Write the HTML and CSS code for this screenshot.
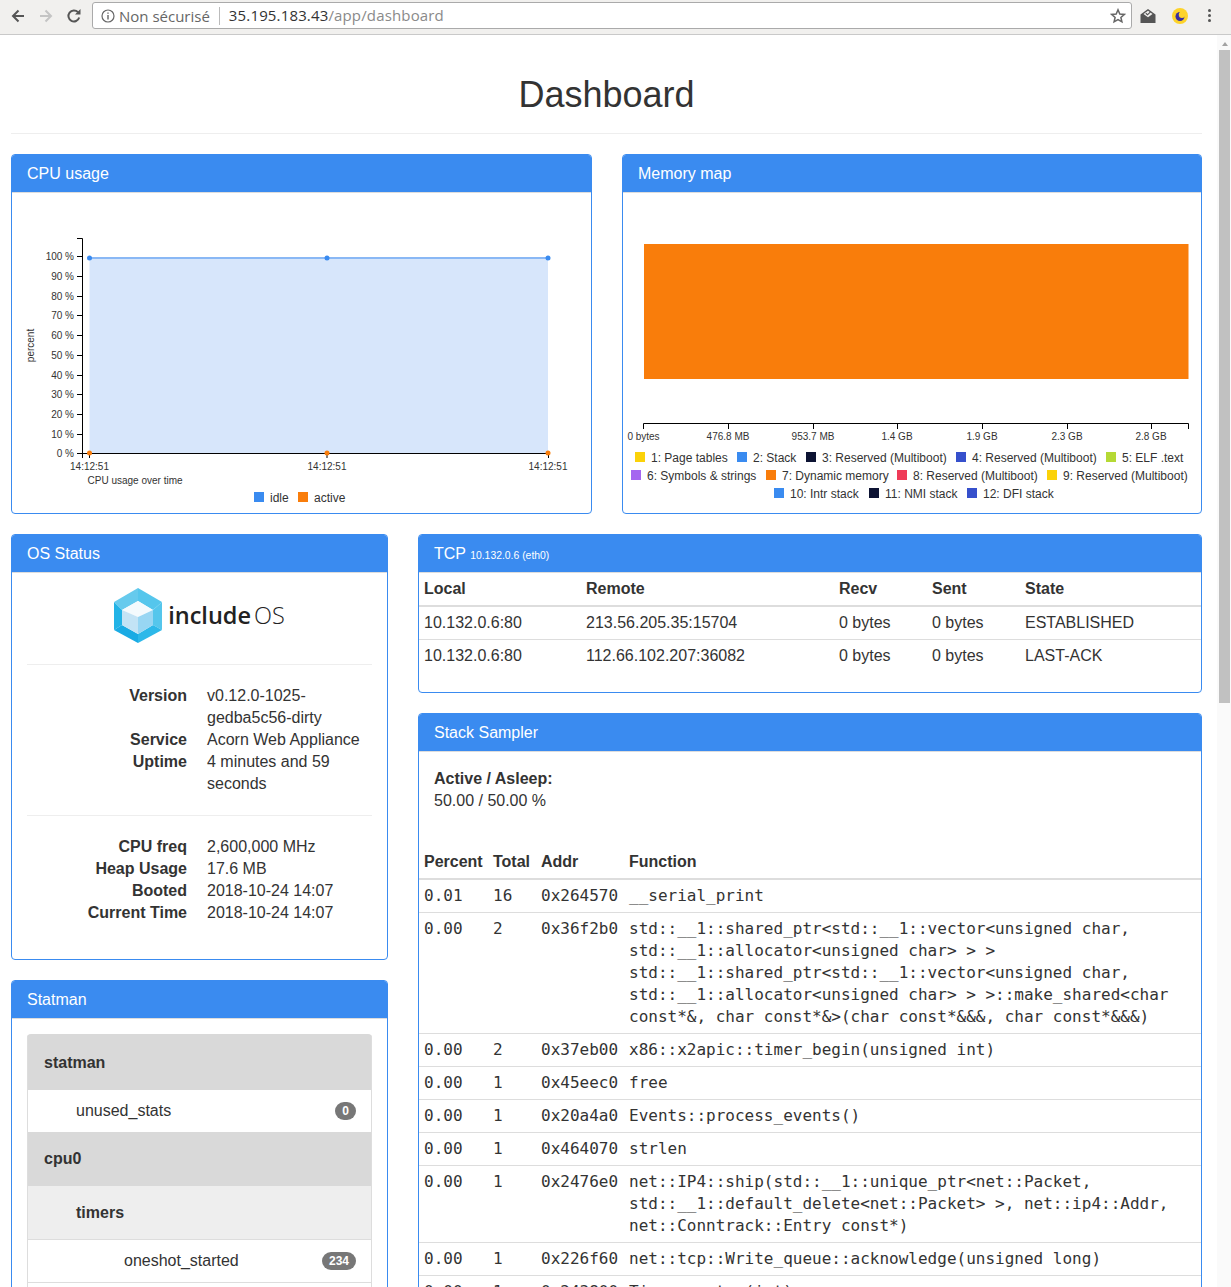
FILE: index.html
```html
<!DOCTYPE html>
<html lang="fr">
<head>
  <meta charset="UTF-8">
  <title>Dashboard</title>
  <link rel="stylesheet" href="styles.css">
</head>
<body>
  <div class="toolbar">
    <svg class="nav-icon" viewBox="0 0 16 16"><path d="M14 8H3.500M8.500 2.500 3 8l5.500 5.500" fill="none" stroke="#555" stroke-width="2"/></svg>
    <svg class="nav-icon" viewBox="0 0 16 16"><path d="M2 8h10.500M7.500 2.500 13 8l-5.500 5.500" fill="none" stroke="#c4c4c4" stroke-width="2"/></svg>
    <svg class="nav-icon" viewBox="0 0 16 16"><path d="M13.200 9.500A5.500 5.500 0 1 1 12 4.200" fill="none" stroke="#555" stroke-width="2"/><path d="M9 6.500h5.500V1z" fill="#555"/></svg>
    <div class="urlbar">
      <svg class="info-icon" viewBox="0 0 14 14"><circle cx="7" cy="7" r="6" fill="none" stroke="#666" stroke-width="1.200"/><path d="M6.300 3.400h1.400v1.400H6.300zM6.300 6h1.400v4.600H6.300z" fill="#666"/></svg>
      <span class="insecure">Non sécurisé</span>
      <span class="url"><b>35.195.183.43</b>/app/dashboard</span>
      <svg class="star" viewBox="0 0 16 16"><path d="M8 1.800l1.800 4.200 4.500.4-3.400 3 1 4.400L8 11.500l-3.900 2.300 1-4.400-3.400-3 4.500-.4z" fill="none" stroke="#666" stroke-width="1.500"/></svg>
    </div>
    <svg class="ext mail" viewBox="0 0 16 16"><path d="M.5 6.500 8 1 15.500 6.500V15H.5z" fill="#555"/><path d="M3.500 6 8 2.800 12.500 6 8 9.200z" fill="#f1f0ee"/><path d="M5.800 5.300 7.500 6.800 10.500 3.800" fill="none" stroke="#555" stroke-width="1.200"/></svg>
    <svg class="ext moon" viewBox="0 0 16 16"><circle cx="8" cy="8" r="8" fill="#fdd32a"/><circle cx="8" cy="8.500" r="4.500" fill="#3a2ea0"/><circle cx="10" cy="6.800" r="3.200" fill="#fdd32a"/></svg>
    <div class="kebab"><i></i><i></i><i></i></div>
  </div>

  <div class="viewport">
    <div class="page">
      <h1 class="page-title">Dashboard</h1>
      <hr class="page-rule">

      <div class="row-half">
        <section class="panel">
          <div class="panel-heading">CPU usage</div>
          <svg class="chart" viewBox="12 193 579 320">
            <path d="M89.500 258H548V453H89.500z" fill="#d7e6fb"/>
            <path d="M89.500 258H548" fill="none" stroke="#8ab8f5" stroke-width="2"/>
            <path d="M77 238.500H82.500V458M82.500 453.500H549" fill="none" stroke="#000"/>
            <path d="M77 256.500h5M77 276.500h5M77 296.500h5M77 315.500h5M77 335.500h5M77 355.500h5M77 375.500h5M77 394.500h5M77 414.500h5M77 434.500h5M77 453.500h5M89.500 453v5M327 453v5M548.500 453v5" fill="none" stroke="#000"/>
            <g fill="#3a8bf0"><circle cx="89.500" cy="258" r="2.500"/><circle cx="327" cy="258" r="2.500"/><circle cx="548" cy="258" r="2.500"/></g>
            <g fill="#f97d0b"><circle cx="89.500" cy="453" r="2.500"/><circle cx="327" cy="453" r="2.500"/><circle cx="548" cy="453" r="2.500"/></g>
            <g class="tick-y">
              <text x="74" y="260">100 %</text><text x="74" y="280">90 %</text><text x="74" y="300">80 %</text><text x="74" y="319">70 %</text><text x="74" y="339">60 %</text><text x="74" y="359">50 %</text><text x="74" y="379">40 %</text><text x="74" y="398">30 %</text><text x="74" y="418">20 %</text><text x="74" y="438">10 %</text><text x="74" y="457">0 %</text>
            </g>
            <g class="tick-x">
              <text x="89.500" y="470">14:12:51</text><text x="327" y="470">14:12:51</text><text x="548" y="470">14:12:51</text>
            </g>
            <text class="tick" transform="translate(34 345.500) rotate(-90)" text-anchor="middle">percent</text>
            <text class="tick" x="87.500" y="484">CPU usage over time</text>
            <rect x="254" y="492" width="10" height="10" fill="#3a8bf0"/><text class="legend" x="270" y="502">idle</text>
            <rect x="298" y="492" width="10" height="10" fill="#f97d0b"/><text class="legend" x="314" y="502">active</text>
          </svg>
        </section>

        <section class="panel">
          <div class="panel-heading">Memory map</div>
          <svg class="chart" viewBox="623 193 578 320">
            <rect x="644" y="244" width="544.500" height="135" fill="#f97d0b"/>
            <path d="M643.500 429V423.500H1188.500V429M728.500 423v6M813.500 423v6M897.500 423v6M982.500 423v6M1067.500 423v6M1151.500 423v6" fill="none" stroke="#000"/>
            <g class="tick-x">
              <text x="643.500" y="440">0 bytes</text><text x="728" y="440">476.8 MB</text><text x="813" y="440">953.7 MB</text><text x="897" y="440">1.4 GB</text><text x="982" y="440">1.9 GB</text><text x="1067" y="440">2.3 GB</text><text x="1151" y="440">2.8 GB</text>
            </g>
            <rect x="635" y="452" width="10" height="10" fill="#fbd209"/><text class="legend" x="651" y="462">1: Page tables</text>
            <rect x="737" y="452" width="10" height="10" fill="#3a8bf0"/><text class="legend" x="753" y="462">2: Stack</text>
            <rect x="806" y="452" width="10" height="10" fill="#0d1333"/><text class="legend" x="822" y="462">3: Reserved (Multiboot)</text>
            <rect x="956" y="452" width="10" height="10" fill="#3650cc"/><text class="legend" x="972" y="462">4: Reserved (Multiboot)</text>
            <rect x="1106" y="452" width="10" height="10" fill="#b5d935"/><text class="legend" x="1122" y="462">5: ELF .text</text>
            <rect x="631" y="470" width="10" height="10" fill="#a566f0"/><text class="legend" x="647" y="480">6: Symbols &amp; strings</text>
            <rect x="766" y="470" width="10" height="10" fill="#f97d0b"/><text class="legend" x="782" y="480">7: Dynamic memory</text>
            <rect x="897" y="470" width="10" height="10" fill="#ef3b58"/><text class="legend" x="913" y="480">8: Reserved (Multiboot)</text>
            <rect x="1047" y="470" width="10" height="10" fill="#fbd209"/><text class="legend" x="1063" y="480">9: Reserved (Multiboot)</text>
            <rect x="774" y="488" width="10" height="10" fill="#3a8bf0"/><text class="legend" x="790" y="498">10: Intr stack</text>
            <rect x="869" y="488" width="10" height="10" fill="#0d1333"/><text class="legend" x="885" y="498">11: NMI stack</text>
            <rect x="967" y="488" width="10" height="10" fill="#3650cc"/><text class="legend" x="983" y="498">12: DFI stack</text>
          </svg>
        </section>
      </div>

      <div class="row-split">
        <div class="col-stack">
          <section class="panel">
            <div class="panel-heading">OS Status</div>
            <div class="panel-body">
              <div class="logo">
                <svg class="logo-mark" viewBox="114 588 48 55">
                  <path d="M138 588 162 602 153 610 138 601z" fill="#55c6ec"/>
                  <path d="M138 588 114 602 122 610 138 601z" fill="#66caed"/>
                  <path d="M162 602V630L153 625V610z" fill="#55c6ec"/>
                  <path d="M114 602V630L122 625V610z" fill="#22b3e6"/>
                  <path d="M162 630 138 643V634L153 625z" fill="#2db8e9"/>
                  <path d="M114 630 138 643V634L122 625z" fill="#1aabe4"/>
                  <path d="M138 601 153 610 138 617 122 610z" fill="#f4fafd"/>
                  <path d="M122 610 138 617V634L122 625z" fill="#c3e3f5"/>
                  <path d="M153 610 138 617V634L153 625z" fill="#98d6f3"/>
                </svg>
                <span class="logo-text"><b>include</b>OS</span>
              </div>
              <hr>
              <dl class="info">
                <dt>Version</dt><dd>v0.12.0-1025-gedba5c56-dirty</dd>
                <dt>Service</dt><dd>Acorn Web Appliance</dd>
                <dt>Uptime</dt><dd>4 minutes and 59 seconds</dd>
              </dl>
              <hr>
              <dl class="info">
                <dt>CPU freq</dt><dd>2,600,000 MHz</dd>
                <dt>Heap Usage</dt><dd>17.6 MB</dd>
                <dt>Booted</dt><dd>2018-10-24 14:07</dd>
                <dt>Current Time</dt><dd>2018-10-24 14:07</dd>
              </dl>
            </div>
          </section>

          <section class="panel">
            <div class="panel-heading">Statman</div>
            <div class="panel-body">
              <ul class="stats">
                <li class="stat-group">statman</li>
                <li class="stat-item depth-1">unused_stats <span class="badge">0</span></li>
                <li class="stat-group">cpu0</li>
                <li class="stat-subgroup">timers</li>
                <li class="stat-item depth-2 ruled">oneshot_started <span class="badge">234</span></li>
                <li class="stat-item stat-next"></li>
              </ul>
            </div>
          </section>
        </div>

        <div class="col-stack">
          <section class="panel">
            <div class="panel-heading">TCP <small>10.132.0.6 (eth0)</small></div>
            <table class="grid tcp">
              <thead>
                <tr><th>Local</th><th>Remote</th><th>Recv</th><th>Sent</th><th>State</th></tr>
              </thead>
              <tbody>
                <tr><td>10.132.0.6:80</td><td>213.56.205.35:15704</td><td>0 bytes</td><td>0 bytes</td><td>ESTABLISHED</td></tr>
                <tr><td>10.132.0.6:80</td><td>112.66.102.207:36082</td><td>0 bytes</td><td>0 bytes</td><td>LAST-ACK</td></tr>
              </tbody>
            </table>
          </section>

          <section class="panel">
            <div class="panel-heading">Stack Sampler</div>
            <div class="panel-body sampler-summary">
              <strong>Active / Asleep:</strong><br>
              50.00 / 50.00 %
            </div>
            <table class="grid sampler">
              <thead>
                <tr><th>Percent</th><th>Total</th><th>Addr</th><th>Function</th></tr>
              </thead>
              <tbody>
                <tr><td>0.01</td><td>16</td><td>0x264570</td><td>__serial_print</td></tr>
                <tr><td>0.00</td><td>2</td><td>0x36f2b0</td><td>std::__1::shared_ptr&lt;std::__1::vector&lt;unsigned char, std::__1::allocator&lt;unsigned char&gt; &gt; &gt; std::__1::shared_ptr&lt;std::__1::vector&lt;unsigned char, std::__1::allocator&lt;unsigned char&gt; &gt; &gt;::make_shared&lt;char const*&amp;, char const*&amp;&gt;(char const*&amp;&amp;&amp;, char const*&amp;&amp;&amp;)</td></tr>
                <tr><td>0.00</td><td>2</td><td>0x37eb00</td><td>x86::x2apic::timer_begin(unsigned int)</td></tr>
                <tr><td>0.00</td><td>1</td><td>0x45eec0</td><td>free</td></tr>
                <tr><td>0.00</td><td>1</td><td>0x20a4a0</td><td>Events::process_events()</td></tr>
                <tr><td>0.00</td><td>1</td><td>0x464070</td><td>strlen</td></tr>
                <tr><td>0.00</td><td>1</td><td>0x2476e0</td><td>net::IP4::ship(std::__1::unique_ptr&lt;net::Packet, std::__1::default_delete&lt;net::Packet&gt; &gt;, net::ip4::Addr, net::Conntrack::Entry const*)</td></tr>
                <tr><td>0.00</td><td>1</td><td>0x226f60</td><td>net::tcp::Write_queue::acknowledge(unsigned long)</td></tr>
                <tr><td>0.00</td><td>1</td><td>0x243800</td><td>Timers::stop(int)</td></tr>
              </tbody>
            </table>
          </section>
        </div>
      </div>
    </div>

    <div class="scrollbar">
      <div class="scroll-up"></div>
      <div class="scroll-thumb"></div>
    </div>
  </div>
</body>
</html>
```

FILE: styles.css
```css
html, body {
  height: 100%;
  margin: 0;
  overflow: hidden;
}

body {
  display: flex;
  flex-direction: column;
  font-family: "Liberation Sans", Arial, sans-serif;
  font-size: 16px;
  line-height: 22px;
  color: #333;
  background: #fff;
}

/* browser chrome */
.toolbar {
  flex: none;
  display: flex;
  align-items: center;
  box-sizing: border-box;
  height: 35px;
  padding: 0 0 3px 10px;
  background: #f1f0ee;
  border-bottom: 1px solid #c9c9c9;
}

.nav-icon {
  width: 16px;
  height: 16px;
  margin-right: 12px;
}

.urlbar {
  flex: none;
  display: flex;
  align-items: center;
  box-sizing: border-box;
  width: 1040px;
  height: 27px;
  margin-left: -2px;
  padding: 0 5px 0 8px;
  background: #fff;
  border: 1px solid #aaa;
  border-radius: 3px;
  font-family: "Open Sans", sans-serif;
  font-size: 15px;
  color: #8a8a8a;
}

.info-icon {
  width: 14px;
  height: 14px;
  margin-right: 4px;
}

.insecure {
  color: #666;
  padding-right: 9px;
  margin-right: 9px;
  border-right: 1px solid #bbb;
  line-height: 18px;
}

.url {
  flex: 1;
  padding-bottom: 2px;
  letter-spacing: 0.15px;
}

.url b {
  font-weight: normal;
  color: #333;
}

.star {
  width: 16px;
  height: 16px;
}

.ext {
  width: 16px;
  height: 16px;
}

.mail {
  margin-left: 8px;
}

.moon {
  margin-left: 16px;
}

.kebab {
  display: flex;
  flex-direction: column;
  gap: 2px;
  margin-left: 20px;
}

.kebab i {
  width: 3px;
  height: 3px;
  background: #555;
  border-radius: 50%;
}

/* page */
.viewport {
  flex: 1;
  display: flex;
  min-height: 0;
  overflow: hidden;
}

.page {
  box-sizing: border-box;
  width: 1217px;
  flex: none;
  padding: 0 15px 0 11px;
}

.page-title {
  margin: 40px 0 0;
  font-size: 36px;
  font-weight: 500;
  line-height: 40px;
  text-align: center;
}

.page-rule {
  margin: 18px 0 20px;
  border: 0;
  border-top: 1px solid #eee;
}

.scrollbar {
  flex: 1;
  background: #fafafa;
  padding: 0 1px 0 2px;
}

.scroll-up {
  width: 0;
  margin: 7px auto 4px;
  border: 3.500px solid transparent;
  border-top: 0;
  border-bottom: 4px solid #a3a3a3;
}

.scroll-thumb {
  height: 653px;
  background: #c1c1c1;
}

.row-half {
  display: grid;
  grid-template-columns: 581px 580px;
  gap: 30px;
  margin-bottom: 20px;
}

.row-split {
  display: grid;
  grid-template-columns: 377px 784px;
  gap: 30px;
}

.col-stack {
  display: flex;
  flex-direction: column;
  gap: 20px;
}

/* panels */
.panel {
  background: #fff;
  border: 1px solid #3a8bf0;
  border-radius: 4px;
}

.panel-heading {
  height: 37px;
  padding: 0 15px;
  background: #3a8bf0;
  border-bottom: 1px solid #ddd;
  border-radius: 3px 3px 0 0;
  color: #fff;
  line-height: 38px;
}

.panel-heading small {
  font-size: 10.400px;
}

.panel-body {
  padding: 15px;
}

.chart {
  display: block;
  width: 100%;
  height: 320px;
}

.chart text {
  font-family: "Liberation Sans", Arial, sans-serif;
  fill: #333;
}

.tick, .tick-x text, .tick-y text {
  font-size: 10px;
}

.tick-y text {
  text-anchor: end;
}

.tick-x text {
  text-anchor: middle;
}

.chart .legend {
  font-size: 12px;
}

/* os status */
.logo {
  display: flex;
  align-items: flex-start;
  justify-content: center;
  height: 56px;
}

.logo-mark {
  width: 48px;
  height: 55px;
  margin-right: 6px;
}

.logo-text {
  font-family: "Open Sans", sans-serif;
  font-size: 23.500px;
  font-weight: 300;
  line-height: 54px;
  color: #222;
}

.logo-text b {
  font-weight: 600;
  margin-right: 3px;
}

.panel-body hr {
  margin: 20px 0;
  border: 0;
  border-top: 1px solid #eee;
}

.info {
  display: grid;
  grid-template-columns: 160px 1fr;
  column-gap: 20px;
  margin: 0 0 20px;
}

.info dt {
  font-weight: bold;
  text-align: right;
}

.info dd {
  margin: 0;
}

/* statman */
.stats {
  list-style: none;
  margin: 0;
  padding: 0;
  border-radius: 4px 4px 0 0;
  overflow: hidden;
}

.stats li {
  border-left: 1px solid #ddd;
  border-right: 1px solid #ddd;
}

.stat-group {
  padding: 16px;
  background: #d9d9d9;
  font-weight: bold;
}

.stat-group:first-child {
  padding: 18px 16px 16px;
}

.stat-subgroup {
  padding: 16px 15px 15px 48px;
  background: #eee;
  font-weight: bold;
  border-bottom: 1px solid #ddd;
}

.stat-item {
  display: flex;
  justify-content: space-between;
  align-items: center;
  padding: 10px 15px;
}

.stat-item.ruled {
  border-bottom: 1px solid #ddd;
}

.stat-next {
  height: 22px;
}

.depth-1 {
  padding-left: 48px;
}

.depth-2 {
  padding-left: 96px;
}

.badge {
  padding: 3px 7px;
  background: #777;
  border-radius: 10px;
  color: #fff;
  font-size: 12px;
  font-weight: bold;
  line-height: 12px;
}

/* tables */
.grid {
  width: 100%;
  border-collapse: collapse;
  table-layout: fixed;
}

.grid th, .grid td {
  padding: 5px;
  text-align: left;
  vertical-align: top;
}

.grid th {
  border-bottom: 2px solid #ddd;
}

.grid td {
  border-top: 1px solid #ddd;
}

.grid tbody tr:first-child td {
  border-top: 0;
}

.tcp {
  margin-bottom: 20px;
}

.tcp th:nth-child(1) { width: 152px; }
.tcp th:nth-child(2) { width: 243px; }
.tcp th:nth-child(3) { width: 83px; }
.tcp th:nth-child(4) { width: 83px; }

.sampler-summary {
  padding: 16px 15px 34px;
}

.sampler th:nth-child(1) { width: 59px; }
.sampler th:nth-child(2) { width: 38px; }
.sampler th:nth-child(3) { width: 78px; }

.sampler td {
  font-family: "DejaVu Sans Mono", monospace;
}
```
